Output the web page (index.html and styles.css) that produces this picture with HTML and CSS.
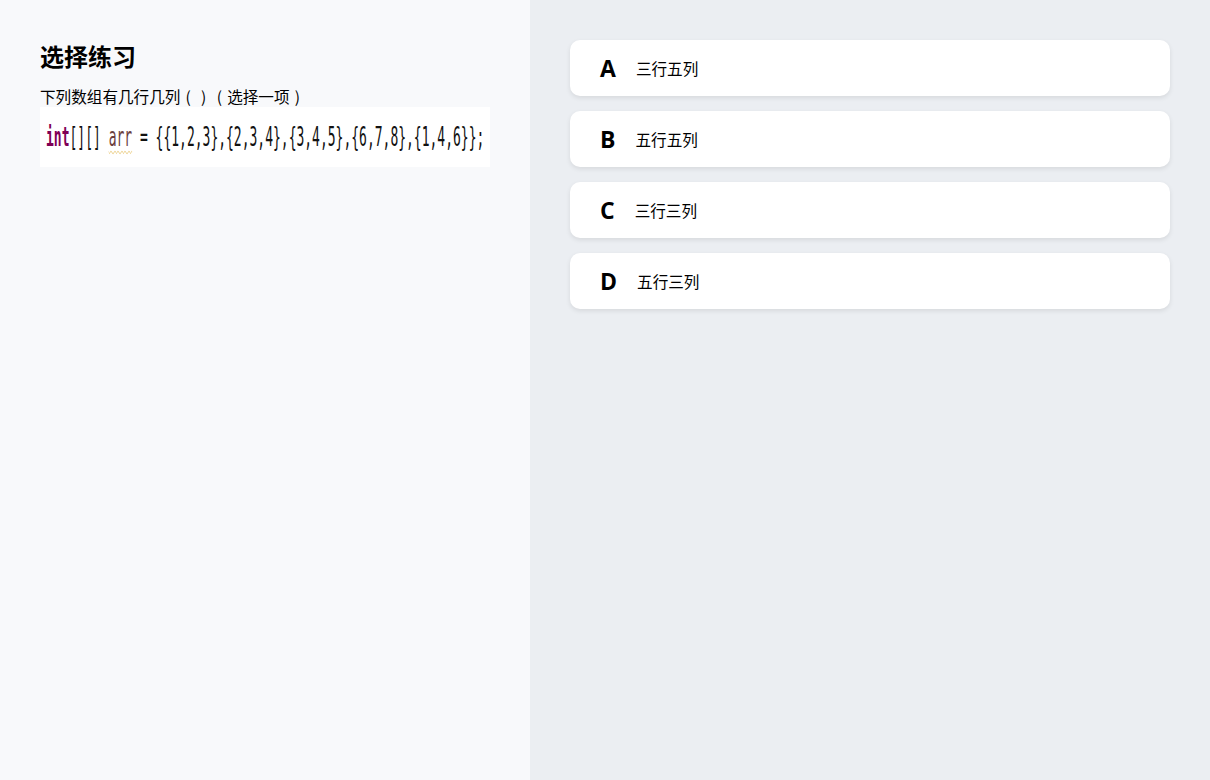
FILE: index.html
```html
<!DOCTYPE html>
<html lang="zh">
<head>
<meta charset="utf-8">
<link rel="stylesheet" href="styles.css">
</head>
<body>
<div class="page">
  <section class="left">
    <h1 class="title">选择练习</h1>
    <p class="question">下列数组有几行几列<span class="paren">(</span><span class="paren">)</span><span class="paren">(</span>选择一项<span class="paren">)</span></p>
    <div class="code-img">
      <code class="code"><span class="kw">int</span>[][] <span class="var">arr</span> = {{1,2,3},{2,3,4},{3,4,5},{6,7,8},{1,4,6}};</code>
    </div>
  </section>
  <section class="right">
    <div class="option"><span class="letter">A</span><span class="text">三行五列</span></div>
    <div class="option"><span class="letter">B</span><span class="text">五行五列</span></div>
    <div class="option"><span class="letter">C</span><span class="text">三行三列</span></div>
    <div class="option"><span class="letter">D</span><span class="text">五行三列</span></div>
  </section>
</div>
</body>
</html>
```
FILE: styles.css
```css
html, body {
  margin: 0;
  padding: 0;
  height: 100%;
}
body {
  font-family: "Noto Sans CJK SC", "Open Sans", sans-serif;
  color: #000;
}
.page {
  display: flex;
  height: 780px;
}
.left {
  width: 530px;
  box-sizing: border-box;
  background: #f8f9fb;
  padding: 38px 40px;
}
.title {
  margin: 0;
  font-size: 24px;
  font-weight: 700;
  line-height: 36px;
}
.question {
  margin: 11px 0 0;
  font-size: 15.6px;
  line-height: 22px;
}
.paren {
  display: inline-block;
  width: 1em;
  text-align: center;
}
.code-img {
  margin-top: 0;
  width: 450px;
  height: 60px;
  background: #fff;
  display: flex;
  align-items: center;
  padding-left: 6px;
  box-sizing: border-box;
  overflow: hidden;
}
.code {
  display: inline-block;
  font-family: "DejaVu Sans Mono", monospace;
  font-size: 26px;
  white-space: pre;
  color: #111;
  transform: scaleX(0.5);
  transform-origin: left center;
  line-height: 30px;
}
.kw {
  color: #7f0055;
  font-weight: 700;
}
.var {
  color: #6a3e3e;
  text-decoration: underline wavy #e5c26a;
  text-underline-offset: 4px;
  text-decoration-thickness: 1px;
}
.right {
  flex: 1;
  background: #ebeef2;
  padding: 40px 40px;
  display: flex;
  flex-direction: column;
  gap: 15px;
}
.option {
  width: 600px;
  height: 56px;
  background: #fff;
  border-radius: 10px;
  box-shadow: 0 2px 5px rgba(0, 0, 0, 0.09);
  display: flex;
  align-items: center;
  padding-left: 30px;
  box-sizing: border-box;
}
.letter {
  font-family: "Open Sans", sans-serif;
  font-weight: 700;
  font-size: 23px;
  margin-right: 20px;
}
.text {
  font-size: 15.6px;
}
```
